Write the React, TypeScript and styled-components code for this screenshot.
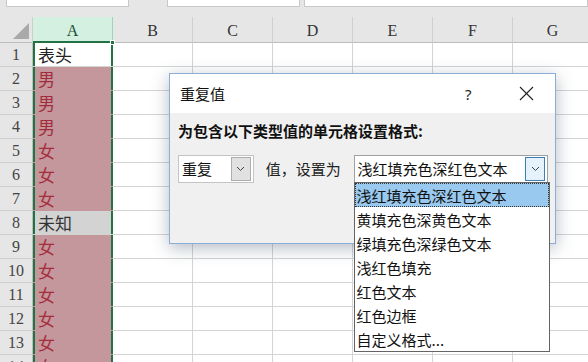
import styled, { createGlobalStyle } from "styled-components";

const GlobalStyle = createGlobalStyle`
  html, body {
    margin: 0;
    padding: 0;
    background: #ffffff;
  }
  * {
    box-sizing: border-box;
  }
`;

type CellKind = "plain" | "dup" | "unique";

const cellsA: { text: string; kind: CellKind }[] = [
  { text: "表头", kind: "plain" },
  { text: "男", kind: "dup" },
  { text: "男", kind: "dup" },
  { text: "男", kind: "dup" },
  { text: "女", kind: "dup" },
  { text: "女", kind: "dup" },
  { text: "女", kind: "dup" },
  { text: "未知", kind: "unique" },
  { text: "女", kind: "dup" },
  { text: "女", kind: "dup" },
  { text: "女", kind: "dup" },
  { text: "女", kind: "dup" },
  { text: "女", kind: "dup" },
  { text: "女", kind: "dup" },
];

const columns = ["A", "B", "C", "D", "E", "F", "G"];

const formatOptions = [
  "浅红填充色深红色文本",
  "黄填充色深黄色文本",
  "绿填充色深绿色文本",
  "浅红色填充",
  "红色文本",
  "红色边框",
  "自定义格式...",
];

const Chevron = () => (
  <svg width="9" height="6" viewBox="0 0 9 6">
    <polyline points="1,1 4.5,4.5 8,1" fill="none" stroke="#444" strokeWidth="1" />
  </svg>
);

const App = () => {
  return (
    <Page>
      <GlobalStyle />
      <TopBar>
        <InputBox $width={126} $left={6} />
        <InputBox $width={136} $left={38} />
        <InputBox $width={290} $left={4} />
      </TopBar>

      <Sheet>
        <Corner>
          <svg width="16" height="16" viewBox="0 0 16 16">
            <polygon points="16,0 16,16 0,16" fill="#a9a9a9" />
          </svg>
        </Corner>
        {columns.map((c, i) => (
          <ColHeader key={c} $active={i === 0}>{c}</ColHeader>
        ))}
        {cellsA.map((cell, r) => (
          <>
            <RowHeader key={`h${r}`}>{r + 1}</RowHeader>
            <CellA key={`a${r}`} $kind={cell.kind}>
              {cell.text}
              {r === 0 && <FillHandle />}
            </CellA>
            {columns.slice(1).map((c) => (
              <Cell key={`${c}${r}`} />
            ))}
          </>
        ))}
      </Sheet>

      <Dialog>
        <TitleBar>
          <Title>重复值</Title>
          <Help>?</Help>
          <CloseButton>
            <svg width="15" height="15" viewBox="0 0 15 15">
              <line x1="1" y1="1" x2="14" y2="14" stroke="#222" strokeWidth="1.1" />
              <line x1="14" y1="1" x2="1" y2="14" stroke="#222" strokeWidth="1.1" />
            </svg>
          </CloseButton>
        </TitleBar>
        <Body>
          <Label>为包含以下类型值的单元格设置格式:</Label>
          <FormRow>
            <Combo $width={76}>
              <ComboText>重复</ComboText>
              <ComboButton>
                <Chevron />
              </ComboButton>
            </Combo>
            <Caption>值，设置为</Caption>
            <Combo $width={195} $open>
              <ComboText>浅红填充色深红色文本</ComboText>
              <ComboButton $focused>
                <Chevron />
              </ComboButton>
              <DropList>
                {formatOptions.map((opt, i) => (
                  <DropItem key={opt} $selected={i === 0}>{opt}</DropItem>
                ))}
              </DropList>
            </Combo>
          </FormRow>
        </Body>
      </Dialog>
    </Page>
  );
};

export default App;

const Page = styled.div`
  position: relative;
  width: 588px;
  height: 362px;
  overflow: hidden;
  background: #ffffff;
  font-family: "Noto Sans CJK SC", "Noto Sans", sans-serif;
`;

const TopBar = styled.div`
  height: 17px;
  display: flex;
  align-items: flex-start;
  background: #e6e6e6;
`;

const InputBox = styled.div<{ $width: number; $left: number }>`
  width: ${(p) => p.$width}px;
  margin-left: ${(p) => p.$left}px;
  height: 7px;
  background: #ffffff;
  border: 1px solid #c8c8c8;
  border-top: 0;
`;

const Sheet = styled.div`
  display: grid;
  grid-template-columns: 33px repeat(7, 80px);
  grid-template-rows: 26px repeat(14, 24px);
`;

const Corner = styled.div`
  background: #e6e6e6;
  border-right: 1px solid #cfcfcf;
  border-bottom: 1px solid #bdbdbd;
  display: flex;
  align-items: flex-end;
  justify-content: flex-end;
  padding: 0 3px 3px 0;
`;

const ColHeader = styled.div<{ $active?: boolean }>`
  background: ${(p) => (p.$active ? "#d3f0e0" : "#e6e6e6")};
  border-right: 1px solid ${(p) => (p.$active ? "#9fd5b7" : "#d0d0d0")};
  border-bottom: ${(p) => (p.$active ? "2px solid #217346" : "1px solid #bdbdbd")};
  display: flex;
  align-items: center;
  justify-content: center;
  font-family: "Liberation Serif", serif;
  font-size: 16px;
  color: ${(p) => (p.$active ? "#1e4d34" : "#333")};
  padding-top: 3px;
`;

const RowHeader = styled.div`
  background: #e6e6e6;
  border-right: 1px solid #bdbdbd;
  border-bottom: 1px solid #cfcfcf;
  display: flex;
  align-items: center;
  justify-content: center;
  font-family: "Liberation Serif", serif;
  font-size: 16px;
  color: #444;
`;

const cellBg: Record<CellKind, string> = {
  plain: "#ffffff",
  dup: "#c4979c",
  unique: "#d3d3d3",
};

const cellColor: Record<CellKind, string> = {
  plain: "#222",
  dup: "#a32c3c",
  unique: "#333",
};

const CellA = styled.div<{ $kind: CellKind }>`
  position: relative;
  background: ${(p) => cellBg[p.$kind]};
  color: ${(p) => cellColor[p.$kind]};
  border-bottom: 1px solid ${(p) => (p.$kind === "plain" ? "#d4d4d4" : "transparent")};
  box-shadow: inset 2px 0 #217346, inset -2px 0 #217346;
  display: flex;
  align-items: center;
  padding-left: 5px;
  font-size: 17px;
  line-height: 24px;
`;

const FillHandle = styled.span`
  position: absolute;
  top: -3px;
  right: -2px;
  width: 5px;
  height: 5px;
  background: #217346;
  border: 1px solid #ffffff;
`;

const Cell = styled.div`
  border-right: 1px solid #d4d4d4;
  border-bottom: 1px solid #d4d4d4;
`;

const Dialog = styled.div`
  position: absolute;
  left: 169px;
  top: 73px;
  width: 387px;
  height: 171px;
  border: 1px solid #8aaed6;
  background: #f0f0f0;
  box-shadow: 0 4px 16px rgba(40, 60, 90, 0.35);
  display: flex;
  flex-direction: column;
`;

const TitleBar = styled.div`
  height: 39px;
  background: #ffffff;
  display: flex;
  align-items: center;
  padding-left: 10px;
`;

const Title = styled.div`
  font-size: 15px;
  line-height: 20px;
  color: #111;
  flex: 1;
`;

const Help = styled.div`
  width: 18px;
  font-family: "Noto Sans", sans-serif;
  font-size: 15px;
  color: #222;
  margin-right: 36px;
`;

const CloseButton = styled.div`
  width: 15px;
  height: 15px;
  margin-right: 21px;
  display: flex;
`;

const Body = styled.div`
  padding: 8px 7px 0 8px;
  display: flex;
  flex-direction: column;
`;

const Label = styled.div`
  font-size: 15px;
  line-height: 20px;
  font-weight: bold;
  color: #111;
`;

const FormRow = styled.div`
  margin-top: 14px;
  display: flex;
  align-items: center;
`;

const Combo = styled.div<{ $width: number; $open?: boolean }>`
  position: relative;
  width: ${(p) => p.$width}px;
  height: 28px;
  background: #ffffff;
  border: 1px solid ${(p) => (p.$open ? "#a0a0a0" : "#c4c4c4")};
  display: flex;
  align-items: center;
  padding: 0 2px 0 3px;
`;

const ComboText = styled.div`
  flex: 1;
  font-size: 15px;
  line-height: 20px;
  color: #111;
  white-space: nowrap;
`;

const ComboButton = styled.div<{ $focused?: boolean }>`
  width: 20px;
  height: 24px;
  background: ${(p) => (p.$focused ? "#e5f1fb" : "#e1e1e1")};
  border: 1px solid ${(p) => (p.$focused ? "#3c7fb1" : "#adadad")};
  display: flex;
  align-items: center;
  justify-content: center;
`;

const Caption = styled.div`
  width: 88px;
  margin-left: 12px;
  font-size: 15px;
  line-height: 20px;
  color: #222;
  white-space: nowrap;
`;

const DropList = styled.div`
  position: absolute;
  top: 26px;
  left: -1px;
  width: 196px;
  background: #ffffff;
  border: 1px solid #646464;
  z-index: 5;
`;

const DropItem = styled.div<{ $selected?: boolean }>`
  height: 24px;
  padding-left: 2px;
  display: flex;
  align-items: center;
  font-size: 15px;
  color: #111;
  white-space: nowrap;
  background: ${(p) => (p.$selected ? "#99c9ef" : "transparent")};
  outline: ${(p) => (p.$selected ? "1px dotted #333" : "none")};
  outline-offset: -1px;
`;
